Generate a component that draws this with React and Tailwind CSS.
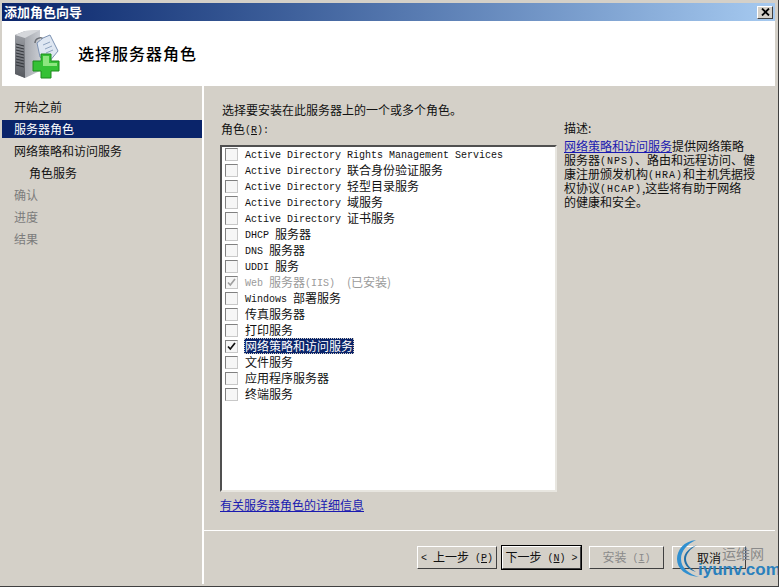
import React from 'react';

// half-width text sits at 10px mono so it keeps the 6px advance of the original bitmap font
function M({ children, wide }) {
  return (
    <span className={"relative -top-px font-['Liberation_Mono',monospace] text-[10px] leading-none text-inherit " + (wide ? 'tracking-[1px]' : '')}>
      {children}
    </span>
  );
}

function Key({ children }) {
  return <span className="relative -top-px font-['Liberation_Mono',monospace] text-[10px] leading-none underline">{children}</span>;
}

const roles = [
  { label: <M>Active Directory Rights Management Services</M> },
  { label: <><M>Active Directory </M>联合身份验证服务</> },
  { label: <><M>Active Directory </M>轻型目录服务</> },
  { label: <><M>Active Directory </M>域服务</> },
  { label: <><M>Active Directory </M>证书服务</> },
  { label: <><M>DHCP </M>服务器</> },
  { label: <><M>DNS </M>服务器</> },
  { label: <><M>UDDI </M>服务</> },
  { label: <><M>Web </M>服务器<M>(IIS)  </M>(已安装)</>, checked: true, disabled: true },
  { label: <><M>Windows </M>部署服务</> },
  { label: '传真服务器' },
  { label: '打印服务' },
  { label: '网络策略和访问服务', checked: true, selected: true },
  { label: '文件服务' },
  { label: '应用程序服务器' },
  { label: '终端服务' },
];

const steps = [
  { label: '开始之前' },
  { label: '服务器角色', selected: true },
  { label: '网络策略和访问服务' },
  { label: '角色服务', sub: true },
  { label: '确认', muted: true },
  { label: '进度', muted: true },
  { label: '结果', muted: true },
];

function ServerIcon() {
  return (
    <svg width="46" height="50" viewBox="0 0 46 50">
      <defs>
        <linearGradient id="side" x1="0" y1="0" x2="1" y2="0">
          <stop offset="0" stopColor="#8d9096" />
          <stop offset="1" stopColor="#c9ccd2" />
        </linearGradient>
        <linearGradient id="front" x1="0" y1="0" x2="0" y2="1">
          <stop offset="0" stopColor="#9a9da3" />
          <stop offset="1" stopColor="#55585e" />
        </linearGradient>
      </defs>
      <path d="M1 6 L11 2 L26 1 L26 42 L11 49 L1 45 Z" fill="url(#side)" />
      <path d="M1 6 L11 9 L11 49 L1 45 Z" fill="url(#front)" />
      <path d="M1 6 L11 2 L26 1 L11 9 Z" fill="#d5d7db" />
      <path d="M2 15 L10 17 M2 18 L10 20 M2 21 L10 23 M2 24 L10 26 M2 27 L10 29 M2 30 L10 32 M2 33 L10 35 M2 36 L10 38" stroke="#33363b" strokeWidth="1" />
      <path d="M21 14 C21 9 28 7 30 11" fill="none" stroke="#6b6e74" strokeWidth="1.5" />
      <path d="M29 9 L36 6 L44 22 L35 33 L26 28 L23 14 Z" fill="#dfe7f2" stroke="#7d93b4" strokeWidth="1" />
      <path d="M29 16 L36 13 M31 20 L38 17 M32 24 L39 21" stroke="#8ea3bf" strokeWidth="1" />
      <path d="M27 25 H37 V32 H45 V42 H37 V49 H27 V42 H19 V32 H27 Z" fill="#35c135" stroke="#1c8a1c" strokeWidth="1" />
      <path d="M29 27 H35 V34 H43 V37 H29 Z" fill="#8de67f" />
    </svg>
  );
}

function Check({ color }) {
  return (
    <svg width="9" height="9" viewBox="0 0 9 9">
      <path d="M1 4.5 L3.3 7 L8 1" fill="none" stroke={color} strokeWidth="1.7" />
    </svg>
  );
}

function RoleRow({ role }) {
  return (
    <div className="flex items-center h-4 pl-[3px] gap-[6px]">
      <span className="flex items-center justify-center w-[13px] h-[13px] border border-t-[#808080] border-l-[#808080] border-r-[#c8c8c8] border-b-[#c8c8c8] bg-[#f6f6f6]">
        {role.checked && <Check color={role.disabled ? '#a0a0a0' : '#111111'} />}
      </span>
      <span
        className={
          role.selected
            ? 'px-px h-4 leading-[16px] whitespace-pre bg-[#0a246a] text-white outline-1 outline-dotted outline-offset-[-1px] outline-[#d4d0c8]'
            : role.disabled
              ? 'px-px h-4 leading-[16px] whitespace-pre text-[#9a9a9a]'
              : 'px-px h-4 leading-[16px] whitespace-pre text-[#111111]'
        }
      >
        {role.label}
      </span>
    </div>
  );
}

function Button({ children, className, isDefault, disabled }) {
  return (
    <div
      className={
        'flex items-center justify-center h-[23px] bg-[#d4d0c8] border border-t-white border-l-white border-r-[#404040] border-b-[#404040] ' +
        (isDefault ? 'outline outline-1 outline-black ' : '') +
        (disabled ? 'text-[#8a8a8a] ' : 'text-[#111111] ') +
        className
      }
    >
      <span className="whitespace-pre">{children}</span>
    </div>
  );
}

export default function App() {
  return (
    <div className="relative w-[779px] h-[587px] overflow-hidden flex flex-col bg-[#d4d0c8] pt-[3px] pl-[2px] pr-[3px] pb-[2px] border-r border-b border-[#404040] font-['Noto_Sans_CJK_SC',sans-serif] text-[12px] leading-[14px] text-[#111111]">
      {/* title bar */}
      <div className="flex items-center justify-between h-[18px] pl-[2px] pr-[2px] bg-gradient-to-r from-[#0a246a] to-[#a6caf0]">
        <span className="text-white font-bold text-[13px] leading-[18px]">添加角色向导</span>
        <div className="flex items-center justify-center w-4 h-[13px] bg-[#d4d0c8] border border-t-white border-l-white border-r-[#404040] border-b-[#404040]">
          <svg width="9" height="8" viewBox="0 0 9 8">
            <path d="M1 0.5 L8 7.5 M8 0.5 L1 7.5" stroke="#000" strokeWidth="1.8" />
          </svg>
        </div>
      </div>

      {/* header */}
      <div className="flex items-center h-[65px] bg-white pl-[12px] gap-[18px]">
        <ServerIcon />
        <span className="text-[16px] leading-[20px] tracking-[1px] font-medium text-black -mt-[2px]">选择服务器角色</span>
      </div>

      <div className="flex flex-1 min-h-0">
        {/* step list */}
        <div className="w-[200px] pt-[10px] shrink-0">
          {steps.map((s) => (
            <div key={s.label} className="h-[22px] flex items-center">
              <div
                className={
                  'w-full h-[18px] leading-[18px] ' +
                  (s.sub ? 'pl-[27px] ' : 'pl-[12px] ') +
                  (s.selected ? 'bg-[#0a246a] text-white ' : s.muted ? 'text-[#7c7c7c] ' : '')
                }
              >
                {s.label}
              </div>
            </div>
          ))}
        </div>

        <div className="flex-1 flex flex-col border-l-2 border-white">
          {/* main area */}
          <div className="flex-1 flex pl-[16px] pt-[16px]">
            <div className="w-[337px] flex flex-col">
              <div className="pl-[2px] h-[16px] leading-[16px]">选择要安装在此服务器上的一个或多个角色。</div>
              <div className="pl-px mt-[3px] h-[16px] leading-[16px]">
                角色<M>(</M><Key>R</Key><M>):</M>
              </div>
              <div className="mt-[8px] h-[347px] bg-white border-2 border-t-[#505050] border-l-[#505050] border-r-[#e8e6e0] border-b-[#e8e6e0]">
                <div className="-mt-px">
                  {roles.map((r, i) => (
                    <RoleRow key={i} role={r} />
                  ))}
                </div>
              </div>
              <a className="mt-[5px] leading-[16px] text-[#1a1ab0] underline">有关服务器角色的详细信息</a>
            </div>
            <div className="ml-[7px] w-[200px]">
              <div className="h-[16px] leading-[16px] mt-[18px]">描述:</div>
              <div className="mt-[3px]">
                <div className="h-[14px] whitespace-nowrap">
                  <a className="text-[#1a1ab0] underline">网络策略和访问服务</a>提供网络策略
                </div>
                <div className="h-[14px] whitespace-nowrap">服务器<M wide>(NPS)</M>、路由和远程访问、健</div>
                <div className="h-[14px] whitespace-nowrap">康注册颁发机构<M wide>(HRA)</M>和主机凭据授</div>
                <div className="h-[14px] whitespace-nowrap">权协议<M wide>(HCAP)</M>,这些将有助于网络</div>
                <div className="h-[14px] whitespace-nowrap">的健康和安全。</div>
              </div>
            </div>
          </div>

          {/* button bar */}
          <div className="h-[54px] shrink-0 border-t border-white flex items-start pt-[15px] pl-[213px]">
            <Button className="w-[80px]">
              <M>&lt; </M>上一步<M> (</M><Key>P</Key><M>)</M>
            </Button>
            <Button isDefault className="w-[79px] ml-[5px]">
              下一步<M> (</M><Key>N</Key><M>) &gt;</M>
            </Button>
            <Button disabled className="w-[75px] ml-[8px]">
              安装<M> (</M><Key>I</Key><M>)</M>
            </Button>
            <Button className="w-[74px] ml-[8px]">取消</Button>
          </div>
        </div>
      </div>

      {/* watermark over the corner */}
      <div className="absolute left-[676px] top-[539px] w-[101px] h-[44px]">
        <svg className="absolute left-0 top-0" width="30" height="40" viewBox="0 0 30 40">
          <path d="M20 1 C8 2 1 11 1 20 C1 30 10 37 23 38 C13 35 5 29 5 20 C5 12 11 5 20 1 Z" fill="#2f8fd0" />
          <path d="M21 6 C13 9 8 14 8 20 C8 26 13 31 20 33 C14 29 10 25 10 20 C10 15 14 10 21 6 Z" fill="#1f6fa8" />
        </svg>
        <span className="absolute left-[46px] top-[5px] text-[14px] leading-[18px] text-[#8a8a8a]">运维网</span>
        <span className="absolute left-[22px] top-[22px] font-['Liberation_Sans',sans-serif] font-bold text-[17px] leading-[18px] text-[#2a80bd]">iyunv.com</span>
      </div>
    </div>
  );
}
